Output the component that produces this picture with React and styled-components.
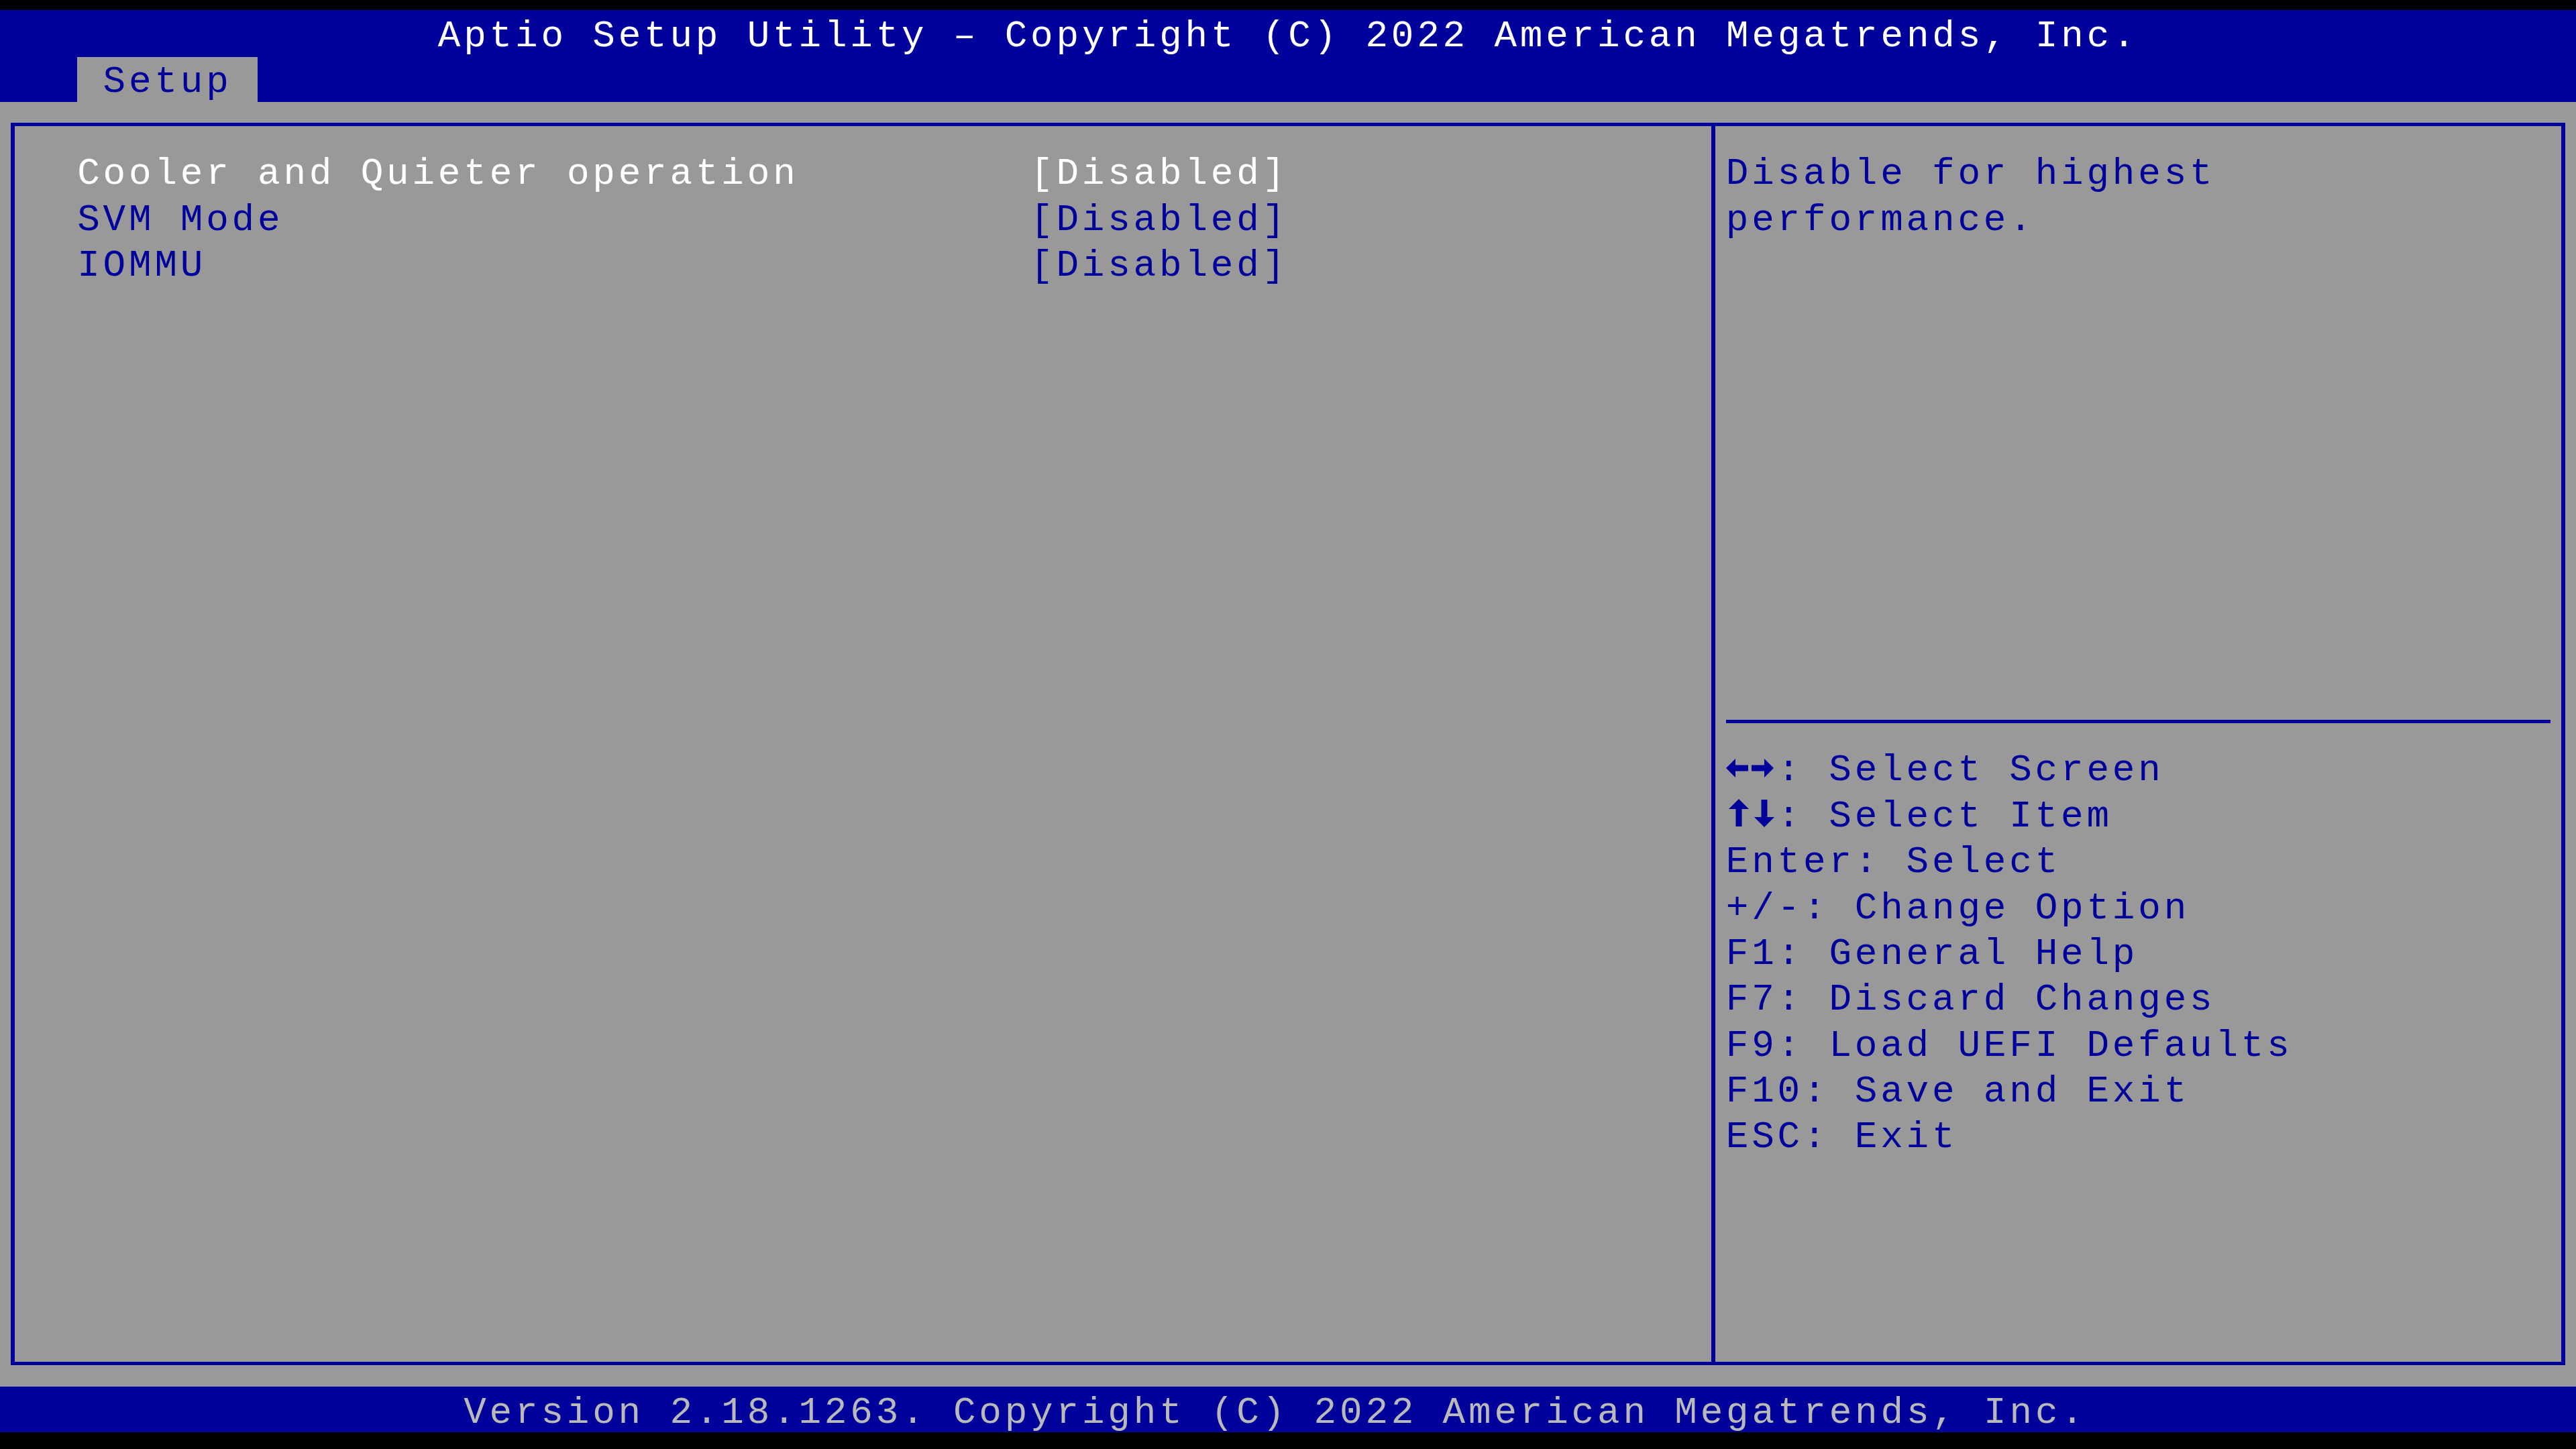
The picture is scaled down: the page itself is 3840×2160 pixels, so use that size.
import React from "react";
import styled, { createGlobalStyle } from "styled-components";

// text-mode grid: 100 columns x 31 rows on a 3840x2160 screen
const COL = 38.4;
const ROW = 68.4;
const BLUE = "#00009b";
const GRAY = "#999999";

const GlobalStyle = createGlobalStyle`
  html, body {
    margin: 0;
    padding: 0;
    background: #000;
  }
`;

const Screen = styled.div`
  width: 3840px;
  height: 2160px;
  box-sizing: border-box;
  padding-top: 15px;
  background: #000;
  display: flex;
  flex-direction: column;
  font-family: "Liberation Mono", "DejaVu Sans Mono", monospace;
  font-size: 56px;
  letter-spacing: 4.8px;
  overflow: hidden;
`;

const Line = styled.div`
  height: ${ROW}px;
  box-sizing: border-box;
  padding-top: 5px;
  line-height: ${ROW}px;
  white-space: pre;
  color: ${(p) => p.$color || BLUE};
`;

// bars across the top and bottom, text starts at a fixed column
const Bar = styled(Line)`
  background: ${BLUE};
  color: ${(p) => p.$color || "#ffffff"};
  padding-left: ${(p) => p.$col * COL}px;
`;

const TabRow = styled.div`
  height: ${ROW}px;
  background: ${BLUE};
  display: flex;
  align-items: flex-end;
  padding-left: ${COL * 3}px;
`;

const Tab = styled(Line)`
  height: 67px;
  padding: 3px ${COL}px 0;
  background: ${GRAY};
  color: ${BLUE};
`;

const Body = styled.div`
  height: ${ROW * 28}px;
  box-sizing: border-box;
  padding: 31.7px 16.2px;
  background: ${GRAY};
  display: flex;
`;

const Frame = styled.div`
  flex: 1;
  display: flex;
  border-style: solid;
  border-color: ${BLUE};
  border-width: 5px 6px;
`;

const MainPane = styled.div`
  width: 2528.4px;
  padding: 31.7px 0 0 93px;
  box-sizing: border-box;
`;

const SettingGrid = styled.div`
  display: grid;
  grid-template-columns: ${COL * 37}px 1fr;
`;

const HelpPane = styled.div`
  flex: 1;
  border-left: 6px solid ${BLUE};
  padding: 31.7px 0 0 16.2px;
  display: flex;
  flex-direction: column;
`;

const HelpText = styled.div`
  height: ${ROW * 12}px;
`;

const Separator = styled.div`
  width: ${COL * 32}px;
  margin: 31.7px 0;
  border-top: 5px solid ${BLUE};
`;

const Glyph = styled.svg`
  width: ${COL}px;
  height: ${ROW}px;
  vertical-align: top;
  fill: ${BLUE};
`;

const LeftArrow = () => (
  <Glyph viewBox={`0 0 ${COL} ${ROW}`}>
    <polygon points="0,31 14,17 14,45" />
    <rect x="12" y="26.5" width="21" height="9" />
  </Glyph>
);

const RightArrow = () => (
  <Glyph viewBox={`0 0 ${COL} ${ROW}`}>
    <rect x="0" y="26.5" width="21" height="9" />
    <polygon points="19,17 33,31 19,45" />
  </Glyph>
);

const UpArrow = () => (
  <Glyph viewBox={`0 0 ${COL} ${ROW}`}>
    <polygon points="19,8 4,23 34,23" />
    <rect x="14.5" y="21" width="9" height="28" />
  </Glyph>
);

const DownArrow = () => (
  <Glyph viewBox={`0 0 ${COL} ${ROW}`}>
    <rect x="14.5" y="9" width="9" height="28" />
    <polygon points="4,35 34,35 19,50" />
  </Glyph>
);

const settings = [
  { name: "Cooler and Quieter operation", value: "[Disabled]", selected: true },
  { name: "SVM Mode", value: "[Disabled]" },
  { name: "IOMMU", value: "[Disabled]" },
];

const keys = [
  "Enter: Select",
  "+/-: Change Option",
  "F1: General Help",
  "F7: Discard Changes",
  "F9: Load UEFI Defaults",
  "F10: Save and Exit",
  "ESC: Exit",
];

export default function App() {
  return (
    <>
      <GlobalStyle />
      <Screen>
        <Bar $col={17}>
          Aptio Setup Utility – Copyright (C) 2022 American Megatrends, Inc.
        </Bar>
        <TabRow>
          <Tab>Setup</Tab>
        </TabRow>
        <Body>
          <Frame>
            <MainPane>
              <SettingGrid>
                {settings.map((s) => (
                  <React.Fragment key={s.name}>
                    <Line $color={s.selected ? "#ffffff" : BLUE}>{s.name}</Line>
                    <Line $color={s.selected ? "#ffffff" : BLUE}>{s.value}</Line>
                  </React.Fragment>
                ))}
              </SettingGrid>
            </MainPane>
            <HelpPane>
              <HelpText>
                <Line>Disable for highest</Line>
                <Line>performance.</Line>
              </HelpText>
              <Separator />
              <Line>
                <LeftArrow />
                <RightArrow />: Select Screen
              </Line>
              <Line>
                <UpArrow />
                <DownArrow />: Select Item
              </Line>
              {keys.map((k) => (
                <Line key={k}>{k}</Line>
              ))}
            </HelpPane>
          </Frame>
        </Body>
        <Bar $col={18} $color="#b9b9b9">
          Version 2.18.1263. Copyright (C) 2022 American Megatrends, Inc.
        </Bar>
      </Screen>
    </>
  );
}
